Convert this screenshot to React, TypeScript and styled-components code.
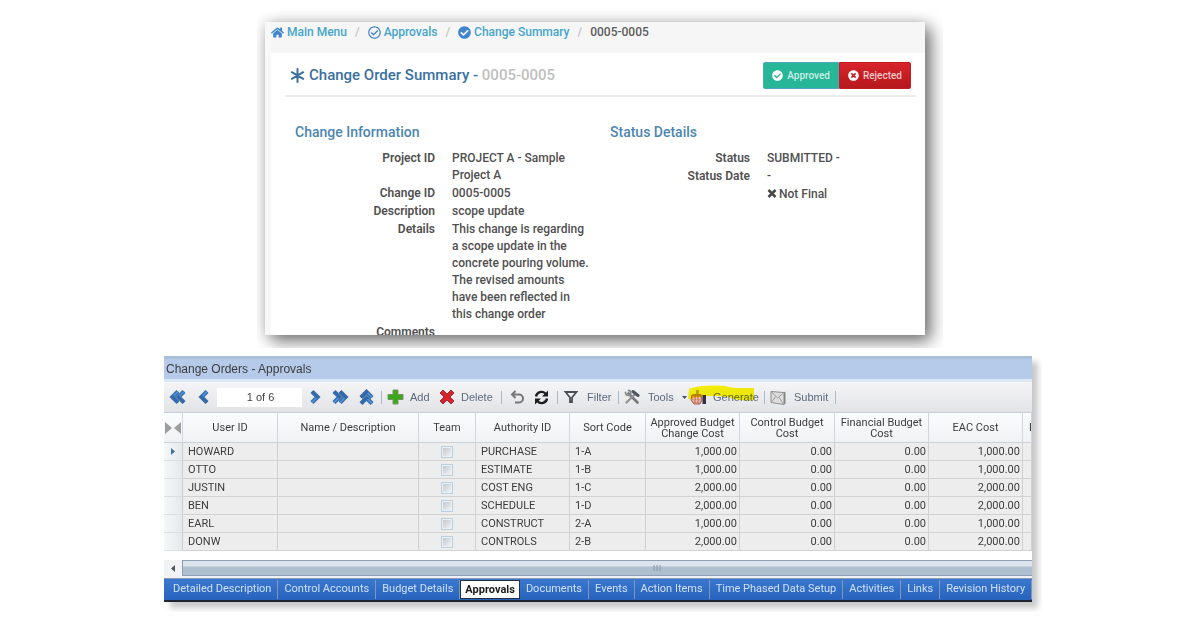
import React from "react";
import styled, { createGlobalStyle } from "styled-components";
import { FaHome, FaRegCheckCircle, FaCheckCircle, FaTimesCircle } from "react-icons/fa";

const GlobalStyle = createGlobalStyle`
  *, *::before, *::after { box-sizing: border-box; }
  body { margin: 0; background: #ffffff; }
  button, input { font: inherit; margin: 0; }
`;

const Page = styled.main`
  display: flex;
  flex-direction: column;
  gap: 21px;
  padding: 22px 168px 24px 164px;
`;

/* ---------- Change order summary ---------- */

const Summary = styled.section`
  margin: 0 107px 0 101px;
  height: 313px;
  overflow: hidden;
  background: #ffffff;
  border-left: 6px solid #f8f8f8;
  color: #505050;
  font: 500 12px/17px Roboto, "Liberation Sans", sans-serif;
  box-shadow: 6px 6px 16px rgba(0, 0, 0, 0.55), 0 0 12px rgba(0, 0, 0, 0.12);
  clip-path: inset(-14px -18px -13px -8px);
`;

const Breadcrumb = styled.nav`
  background: #f6f6f6;
  height: 31px;
  padding-bottom: 11px;
  display: flex;
  align-items: center;
  gap: 8px;
  color: #c4c4c4;
`;

const Crumb = styled.a<{ $current?: boolean }>`
  display: flex;
  align-items: center;
  gap: 3px;
  color: ${(p) => (p.$current ? "#5c5c5c" : "#45a5cc")};
  text-decoration: none;
  svg { color: #3f86cf; width: 13px; height: 13px; }
`;

const SummaryHeader = styled.header`
  display: flex;
  align-items: center;
  justify-content: space-between;
  margin: 0 9px 0 14px;
  padding: 2px 5px 0;
  height: 44px;
  border-bottom: 2px solid #ececec;
`;

const SummaryTitle = styled.h1`
  display: flex;
  align-items: center;
  gap: 4px;
  margin: 0;
  color: #39709f;
  font-size: 15px;
  font-weight: 500;
  line-height: 18px;
`;

const Muted = styled.span`
  color: #c0c0c0;
`;

const ButtonGroup = styled.div`
  display: flex;
`;

const StatusButton = styled.button<{ $tone: "ok" | "bad" }>`
  display: flex;
  align-items: center;
  justify-content: center;
  gap: 4px;
  height: 27px;
  padding: 0 8px;
  color: ${(p) => (p.$tone === "ok" ? "#c9f0e6" : "#f6c9cb")};
  font-size: 10px;
  font-weight: 500;
  background: ${(p) => (p.$tone === "ok" ? "#27b698" : "linear-gradient(#d8232b, #b5181d)")};
  border: 1px solid ${(p) => (p.$tone === "ok" ? "#4fa9b8" : "#c01c22")};
  border-radius: ${(p) => (p.$tone === "ok" ? "2px 0 0 2px" : "0 2px 2px 0")};
  svg { color: #ffffff; width: 11px; height: 11px; }
`;

const Columns = styled.div`
  display: grid;
  grid-template-columns: 315px 1fr;
  padding: 26px 9px 0 24px;
`;

const BlockTitle = styled.h2`
  margin: 0 0 9px;
  color: #4d86b0;
  font-size: 14px;
  font-weight: 500;
  line-height: 18px;
`;

const Details = styled.dl`
  display: grid;
  grid-template-columns: 140px 140px;
  column-gap: 17px;
  row-gap: 1px;
  margin: 0;
`;

const Term = styled.dt`
  text-align: right;
  font-weight: 600;
`;

const Value = styled.dd`
  margin: 0;
`;

/* ---------- Approvals window ---------- */

const Window = styled.section`
  font: 11px/12px "Liberation Sans", Arial, sans-serif;
  color: #3c3c3c;
  background: #ffffff;
  box-shadow: 6px 6px 6px rgba(0, 0, 0, 0.22);
  border-bottom: 2px solid #1f2430;
  clip-path: inset(0 -10px -10px 0);
`;

const TitleBar = styled.h2`
  margin: 0;
  height: 26px;
  padding: 2px 2px 0;
  border-top: 3px solid #a9c0d8;
  border-bottom: 3px solid #dbe8f6;
  background: #b6cbea;
  font-size: 12px;
  font-weight: 400;
  line-height: 16px;
`;

const Toolbar = styled.div`
  display: flex;
  align-items: center;
  height: 30px;
  padding-left: 5px;
  background: linear-gradient(#f5f5f7, #e2e3e6);
  color: #5b6b80;
`;

const Tool = styled.button<{ $w: number; $wide?: boolean }>`
  position: relative;
  display: flex;
  align-items: center;
  gap: ${(p) => (p.$wide ? 8 : 6)}px;
  width: ${(p) => p.$w}px;
  flex: none;
  height: 24px;
  padding: 0;
  border: 0;
  background: none;
  color: inherit;
  white-space: nowrap;
  svg { flex: none; }
`;

const PageBox = styled.input`
  width: 85px;
  height: 19px;
  margin-right: 5px;
  padding: 0 0 0 2px;
  border: 0;
  background: #ffffff;
  color: #444444;
  text-align: center;
`;

const Divider = styled.span`
  width: 1px;
  height: 13px;
  margin-right: 5px;
  background: #a9b9cc;
`;

const Marker = styled.svg`
  position: absolute;
  left: -2px;
  top: 0;
  mix-blend-mode: multiply;
  pointer-events: none;
`;

const Grid = styled.table`
  width: 100%;
  table-layout: fixed;
  border-collapse: separate;
  border-spacing: 0;
  font-family: Roboto, "Liberation Sans", sans-serif;
`;

const Col = styled.col<{ $w?: number }>`
  width: ${(p) => (p.$w ? `${p.$w}px` : "auto")};
`;

const HeadCell = styled.th<{ $edge?: boolean }>`
  height: 31px;
  padding: ${(p) => (p.$edge ? "0 0 0 6px" : "0")};
  overflow: hidden;
  font-weight: 400;
  line-height: 11px;
  text-align: ${(p) => (p.$edge ? "left" : "center")};
  border-right: 1px solid #cfd6e2;
  border-top: 1px solid #c9d0dc;
  border-bottom: 1px solid #cdd2da;
  background: linear-gradient(#fafdfe, #f0f1f3);
  svg { display: block; }
`;

const Cell = styled.td<{ $align?: "right" | "center" }>`
  height: 18px;
  padding: 1px 2px 0 ${(p) => (p.$align ? 2 : 5)}px;
  overflow: hidden;
  text-align: ${(p) => p.$align ?? "left"};
  border-right: 1px solid #d0d0d0;
  border-bottom: 1px solid #d2d2d2;
  background: #ededed;
  white-space: nowrap;
`;

const RowHandle = styled.th`
  padding: 0;
  border-right: 1px solid #cccccc;
  border-bottom: 1px solid #dcdfe2;
  background: linear-gradient(90deg, #f5f8f9, #e6e9eb);
  svg { display: block; margin: 0 auto; }
`;

const Tick = styled.input`
  appearance: none;
  display: block;
  width: 12px;
  height: 12px;
  margin: 0 auto;
  border: 1px solid #bccfdf;
  background: linear-gradient(135deg, #bfc5ca, #f6f6f6);
  box-shadow: inset 0 0 0 1px #e9f1f7;
`;

const ScrollBar = styled.div`
  display: flex;
  height: 18px;
  margin-top: 9px;
  background: #eef1f5;
`;

const ScrollArrow = styled.button`
  width: 18px;
  flex: none;
  padding: 0 0 2px;
  border: 0;
  background: #f1f3f5;
  svg { display: block; margin: 0 auto; }
`;

const ScrollThumb = styled.div`
  flex: 1;
  height: 16px;
  display: flex;
  align-items: center;
  justify-content: center;
  padding-left: 98px;
  border: 1px solid #8ba0b6;
  border-right: 0;
  background: linear-gradient(#dde3ea 0 35%, #aebfd0 45% 100%);
`;

const Tabs = styled.nav`
  display: flex;
  height: 22px;
  padding-left: 3px;
  border-top: 1px solid #8a9cb4;
  background: linear-gradient(#3b78cf, #2763bd);
  font-family: Roboto, "Liberation Sans", sans-serif;
`;

const Tab = styled.a<{ $active?: boolean }>`
  flex: none;
  margin: 1px 0;
  padding: ${(p) => (p.$active ? "0 4px" : "0 6px")};
  border: ${(p) => (p.$active ? "1px solid #24303f" : "0 solid #8097b5")};
  border-right-width: 1px;
  color: ${(p) => (p.$active ? "#1b1b1b" : "#cfe0f6")};
  background: ${(p) => (p.$active ? "#ffffff" : "none")};
  font-weight: ${(p) => (p.$active ? 700 : 400)};
  line-height: 18px;
  text-decoration: none;
  white-space: nowrap;
`;

const Asterisk = () => (
  <svg width="15" height="15" viewBox="0 0 15 15" stroke="#39709f" strokeWidth="2" strokeLinecap="round">
    <path d="M7.500 1v13M1.800 4.200l11.400 6.600M13.200 4.200L1.800 10.800" />
  </svg>
);

const NotIcon = () => (
  <svg width="12" height="9" viewBox="0 0 12 9" stroke="#484848" strokeWidth="2.600">
    <path d="M1.500 1l7 7M8.500 1l-7 7" />
  </svg>
);

const Chevrons = ({ dir, double }: { dir: "left" | "right" | "up"; double?: boolean }) => {
  const turn = { left: 180, right: 0, up: -90 }[dir];
  return (
    <svg width="17" height="16" viewBox="0 0 17 16">
      <g transform={`rotate(${turn} 8.500 8)`} fill="none">
        {(double ? [2, 8] : [5]).map((x) => (
          <g key={x}>
            <path d={`M${x} 2.500l5.500 5.500l-5.500 5.500`} strokeWidth="4.400" stroke="#47749f" />
            <path d={`M${x} 2.500l5.500 5.500l-5.500 5.500`} strokeWidth="2.400" stroke="#2d68b0" />
            <path d={`M${x} 13.500l4.500-4.500`} strokeWidth="1.400" stroke="#4d97ea" />
          </g>
        ))}
      </g>
    </svg>
  );
};

const PlusIcon = () => (
  <svg width="17" height="16" viewBox="0 0 17 16">
    <path d="M6 1h5v4.500h5v5h-5V15H6v-4.500H1v-5h5z" fill="#3ea51f" stroke="#6f9a5e" />
  </svg>
);

const CrossIcon = () => (
  <svg width="16" height="16" viewBox="0 0 16 16">
    <path d="M4 1l4 4 4-4 3 3-4 4 4 4-3 3-4-4-4 4-3-3 4-4-4-4z" fill="#d8232a" stroke="#96343a" />
  </svg>
);

const UndoIcon = () => (
  <svg width="18" height="15" viewBox="-3 0 18 15" fill="none" stroke="#777777" strokeWidth="2">
    <path d="M2.500 4.500h6.500a4 4 0 0 1 0 8H5" />
    <path d="M5.500 1L2 4.500 5.500 8" />
  </svg>
);

const RefreshIcon = () => (
  <svg width="16" height="15" viewBox="-1 0 16 15">
    <g fill="none" stroke="#1e1e1e" strokeWidth="2.400">
      <path d="M2 6.500a5.500 5.500 0 0 1 9.500-2.800" />
      <path d="M13 8.500a5.500 5.500 0 0 1-9.500 2.800" />
    </g>
    <path d="M14 .5v6H8zM1 14.500v-6h6z" fill="#1e1e1e" />
  </svg>
);

const FilterIcon = () => (
  <svg width="16" height="14" viewBox="-1 0 16 14">
    <path d="M1.500 2h11L8 7.500V12H6V7.500z" fill="#f2f2f2" stroke="#4a4f57" strokeWidth="1.800" />
  </svg>
);

const ToolsIcon = () => (
  <svg width="16" height="16" viewBox="0 0 16 16" fill="none" strokeLinecap="round">
    <path d="M4.500 4.500l9 9" stroke="#777777" strokeWidth="2.600" />
    <path d="M1.500 3.500c0 3 3 3.500 4.500 2s1-4-1.500-4" stroke="#8b8b8b" strokeWidth="1.800" />
    <path d="M2.500 13.500l8-8" stroke="#8f8f8f" strokeWidth="2.200" />
    <path d="M9 2.500l5 4" stroke="#4d5660" strokeWidth="3" />
  </svg>
);

const GenerateIcon = () => (
  <svg width="17" height="16" viewBox="0 0 17 16">
    <path d="M6 1h3v4h3L7.500 9 3 5h3z" fill="#b7ad7c" />
    <path d="M2 6h9l1 5-2 4H4l-3-4z" fill="#dda294" stroke="#a8604c" />
    <path d="M3 9h7M3.500 12h6" stroke="#f8ece6" />
    <path d="M5 7v7M8 7v7" stroke="#c65a4a" />
    <path d="M12.500 6H16v9h-3.500z" fill="#34303f" />
  </svg>
);

const MailIcon = () => (
  <svg width="16" height="15" viewBox="0 0 16 15">
    <path d="M1 1.500l13 1v12l-13-2z" fill="#dedede" stroke="#8d8d8d" />
    <path d="M14 2.500l1.500-1v12l-1.500 1z" fill="#858585" />
    <path d="M1.500 2l6 6 6-5M1.500 12l4-5M13.500 14L9 7.500" fill="none" stroke="#9c9c9c" />
  </svg>
);

const COLUMNS: { label: string; width?: number }[] = [
  { label: "User ID", width: 95 },
  { label: "Name / Description" },
  { label: "Team", width: 57 },
  { label: "Authority ID", width: 94 },
  { label: "Sort Code", width: 76 },
  { label: "Approved Budget Change Cost", width: 94 },
  { label: "Control Budget Cost", width: 95 },
  { label: "Financial Budget Cost", width: 94 },
  { label: "EAC Cost", width: 94 },
];

const ROWS = [
  ["HOWARD", "PURCHASE", "1-A", "1,000.00"],
  ["OTTO", "ESTIMATE", "1-B", "1,000.00"],
  ["JUSTIN", "COST ENG", "1-C", "2,000.00"],
  ["BEN", "SCHEDULE", "1-D", "2,000.00"],
  ["EARL", "CONSTRUCT", "2-A", "1,000.00"],
  ["DONW", "CONTROLS", "2-B", "2,000.00"],
];

const TABS = [
  "Detailed Description", "Control Accounts", "Budget Details", "Approvals", "Documents", "Events",
  "Action Items", "Time Phased Data Setup", "Activities", "Links", "Revision History",
];

export default function App() {
  return (
    <>
      <GlobalStyle />
      <Page>
        <Summary>
          <Breadcrumb aria-label="Breadcrumb">
            <Crumb href="#menu"><FaHome />Main Menu</Crumb>/
            <Crumb href="#approvals"><FaRegCheckCircle />Approvals</Crumb>/
            <Crumb href="#summary"><FaCheckCircle />Change Summary</Crumb>/
            <Crumb href="#order" $current>0005-0005</Crumb>
          </Breadcrumb>
          <SummaryHeader>
            <SummaryTitle><Asterisk /><span>Change Order Summary - <Muted>0005-0005</Muted></span></SummaryTitle>
            <ButtonGroup>
              <StatusButton $tone="ok"><FaCheckCircle />Approved</StatusButton>
              <StatusButton $tone="bad"><FaTimesCircle />Rejected</StatusButton>
            </ButtonGroup>
          </SummaryHeader>
          <Columns>
            <div>
              <BlockTitle>Change Information</BlockTitle>
              <Details>
                <Term>Project ID</Term><Value>PROJECT A - Sample Project A</Value>
                <Term>Change ID</Term><Value>0005-0005</Value>
                <Term>Description</Term><Value>scope update</Value>
                <Term>Details</Term>
                <Value>
                  This change is regarding a scope update in the concrete pouring volume. The revised
                  amounts have been reflected in this change order
                </Value>
                <Term>Comments</Term><Value />
              </Details>
            </div>
            <div>
              <BlockTitle>Status Details</BlockTitle>
              <Details>
                <Term>Status</Term><Value>SUBMITTED -</Value>
                <Term>Status Date</Term><Value>-</Value>
                <Term /><Value><NotIcon />Not Final</Value>
              </Details>
            </div>
          </Columns>
        </Summary>

        <Window>
          <TitleBar>Change Orders - Approvals</TitleBar>
          <Toolbar>
            <Tool $w={26} aria-label="First"><Chevrons dir="left" double /></Tool>
            <Tool $w={22} aria-label="Previous"><Chevrons dir="left" /></Tool>
            <PageBox aria-label="Page" defaultValue="1 of 6" />
            <Tool $w={25} aria-label="Next"><Chevrons dir="right" /></Tool>
            <Tool $w={26} aria-label="Last"><Chevrons dir="right" double /></Tool>
            <Tool $w={23} aria-label="Up"><Chevrons dir="up" double /></Tool>
            <Divider />
            <Tool $w={52}><PlusIcon />Add</Tool>
            <Tool $w={62}><CrossIcon />Delete</Tool>
            <Divider />
            <Tool $w={26} aria-label="Undo"><UndoIcon /></Tool>
            <Tool $w={24} aria-label="Refresh"><RefreshIcon /></Tool>
            <Divider />
            <Tool $w={55} $wide><FilterIcon />Filter</Tool>
            <Divider />
            <Tool $w={66} $wide>
              <ToolsIcon />Tools
              <svg width="5" height="3" viewBox="0 0 5 3"><path d="M0 0h5L2.500 3z" fill="#3f4f66" /></svg>
            </Tool>
            <Tool $w={74}>
              <GenerateIcon />Generate
              <Marker width="68" height="18" viewBox="0 0 68 18">
                <path d="M1 4C8 0 30 0 38 1c4 2 10 2 28 2v12c-10 1-14 0-20-1-8-3-14-3-22-3-6 0-8 0-12 1-4 0-8 2-12 2z" fill="#fff80c" />
              </Marker>
            </Tool>
            <Divider />
            <Tool $w={65} $wide><MailIcon />Submit</Tool>
            <Divider />
          </Toolbar>
          <Grid>
            <colgroup>
              <Col $w={19} />
              {COLUMNS.map((c) => <Col key={c.label} $w={c.width} />)}
              <Col $w={9} />
            </colgroup>
            <thead>
              <tr>
                <HeadCell aria-label="Row">
                  <svg width="18" height="14" viewBox="0 0 18 14">
                    <path d="M1 1l7 6-7 6zM17 1l-7 6 7 6z" fill="#9d9d9d" />
                  </svg>
                </HeadCell>
                {COLUMNS.map((c) => <HeadCell key={c.label}>{c.label}</HeadCell>)}
                <HeadCell $edge>F</HeadCell>
              </tr>
            </thead>
            <tbody>
              {ROWS.map(([user, authority, code, amount], i) => (
                <tr key={user}>
                  <RowHandle scope="row" aria-label={user}>
                    {i === 0 && (
                      <svg width="4" height="7" viewBox="0 0 4 7"><path d="M0 0l4 3.500-4 3.500z" fill="#39719f" /></svg>
                    )}
                  </RowHandle>
                  <Cell>{user}</Cell>
                  <Cell />
                  <Cell $align="center"><Tick type="checkbox" aria-label={`Team ${user}`} /></Cell>
                  <Cell>{authority}</Cell>
                  <Cell>{code}</Cell>
                  <Cell $align="right">{amount}</Cell>
                  <Cell $align="right">0.00</Cell>
                  <Cell $align="right">0.00</Cell>
                  <Cell $align="right">{amount}</Cell>
                  <Cell />
                </tr>
              ))}
            </tbody>
          </Grid>
          <ScrollBar>
            <ScrollArrow aria-label="Scroll left">
              <svg width="4" height="7" viewBox="0 0 4 7"><path d="M4 0v7L0 3.500z" fill="#4a5866" /></svg>
            </ScrollArrow>
            <ScrollThumb>
              <svg width="8" height="6" viewBox="0 0 8 6"><path d="M1 0v6M4 0v6M7 0v6" stroke="#8496a8" /></svg>
            </ScrollThumb>
          </ScrollBar>
          <Tabs aria-label="Sections">
            {TABS.map((t) => <Tab key={t} href="#tab" $active={t === "Approvals"}>{t}</Tab>)}
          </Tabs>
        </Window>
      </Page>
    </>
  );
}
